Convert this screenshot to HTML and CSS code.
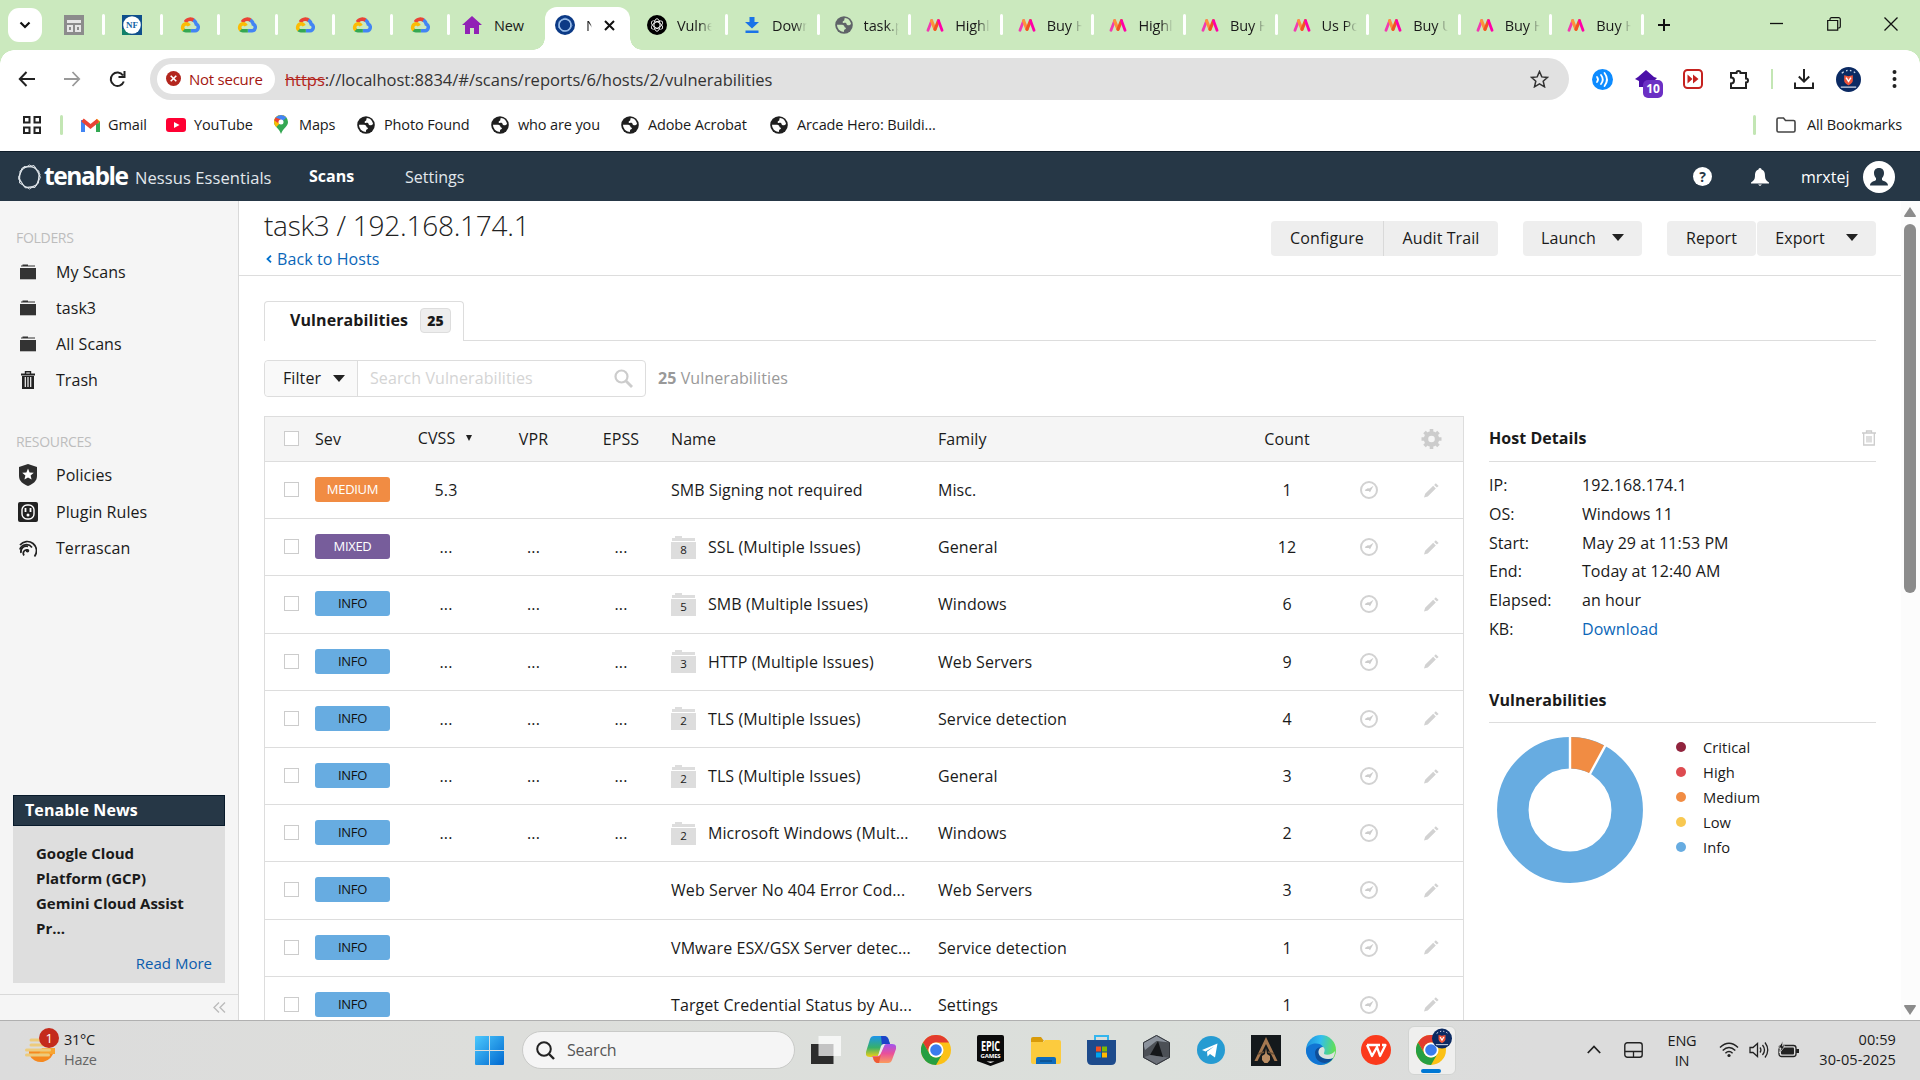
FILE: index.html
```html
<!DOCTYPE html>
<html lang="en">
<head>
<meta charset="utf-8">
<title>Nessus Essentials / Folders / View Scan</title>
<link rel="stylesheet" href="styles.css">
</head>
<body>
<svg class="defs" width="0" height="0">
  <symbol id="gcloud" viewBox="0 0 24 20"><path d="M6.500 6.500A6.500 6.500 0 0 1 17 5" fill="none" stroke="#ea4335" stroke-width="4.400"/><path d="M16 4a8 8 0 0 1 3.500 5A4.200 4.200 0 0 1 18 17h-5" fill="none" stroke="#4285f4" stroke-width="4.200"/><path d="M13 17H7a5 5 0 0 1-3-1.300" fill="none" stroke="#34a853" stroke-width="4.200"/><path d="M4.500 16A4.400 4.400 0 0 1 7 8.500a4.500 4.500 0 0 1 4 2.500" fill="none" stroke="#fbbc05" stroke-width="4.200"/></symbol>
  <symbol id="globe" viewBox="0 0 20 20"><circle cx="10" cy="10" r="9.800" fill="currentColor"/><path d="M11 2.200c3.600.2 6.300 3 6.800 6.600-1.200 1.400-2.700 2-4.200 1.200-1.200-.7-.2-1.800-1.500-2.300-1.400-.4-2.300.6-3.300-.2-1-.9.200-2 1.300-2.600.8-.5-.3-1.600.9-2.700z" fill="var(--cut)"/><path d="M2.200 9.800h5.600c1.800 0 2.600 1.200 2.700 2.200.1 1 1.600.6 1.700 1.700 0 1.200-1.500 1-2 1.800-.4.700.1 1.600-.6 2.300A7.800 7.800 0 0 1 2.200 9.800z" fill="var(--cut)"/></symbol>
  <symbol id="myntra" viewBox="0 0 20 16"><path d="M2 14 6.200 3" stroke="#f13ab1" stroke-width="3.200" stroke-linecap="round"/><path d="M6 3l4 10" stroke="#fd913c" stroke-width="3.600" stroke-linecap="round"/><path d="M10 13l4-10" stroke="#f05524" stroke-width="3.600" stroke-linecap="round"/><path d="M14 3l4 11" stroke="#ff00a8" stroke-width="3.200" stroke-linecap="round"/></symbol>
  <symbol id="folder" viewBox="0 0 16 16"><path d="M1 2.500V1.500h1.500V.5H8v1h7v1zM0 4h16v11H0z" fill="#333"/><path d="M0 15h16v1H0z" fill="#bbb"/></symbol>
  <symbol id="group" viewBox="0 0 25 23"><path d="M1 5V2h3V0h7v2h13v3zM0 6h25v17H0z" fill="#ddd"/></symbol>
  <symbol id="clock" viewBox="0 0 18 18"><circle cx="9" cy="9" r="8" fill="none" stroke="#d2d2d2" stroke-width="2"/><path d="M13.500 4.800 10 11.200 8.800 10H5.500L4.800 9l3-1.800 1.500.2z" fill="#ccc"/></symbol>
  <symbol id="pencil" viewBox="0 0 16 16"><path d="M0 15.500l1.200-4L9.800 3l2.800 2.800L4 14.300zM10.800 2 12.600.2l3 3-1.900 1.700z" fill="#d2d2d2"/></symbol>
  <symbol id="chrome" viewBox="0 0 30 30"><circle cx="15" cy="15" r="15" fill="#fbc116"/><path d="M2 7.500A15 15 0 0 1 28 7.500H15a7.500 7.500 0 0 0-6.500 11.300z" fill="#e33b2e"/><path d="M2 7.500A15 15 0 0 0 15 30l6.500-11.300a7.500 7.500 0 0 1-13 0z" fill="#269f42"/><circle cx="15" cy="15" r="7.500" fill="#fff"/><circle cx="15" cy="15" r="5.800" fill="#3a7cec"/></symbol>
  <symbol id="badge" viewBox="0 0 26 26"><circle cx="13" cy="13" r="13" fill="#0b2a63"/><path d="M8.500 8.500 13 9.500l4.500-1v5.500c0 3-4.500 5-4.500 5s-4.500-2-4.500-5z" fill="#f0543a"/><path d="M10.500 11l2.500 4 2.500-4" stroke="#fff" stroke-width="1.500" fill="none"/><path d="M6 6.500l2-1.500M10.500 4l1.500-.5M14.500 3.500l1.500.5M18.500 5l1.500 1M5 21h16" stroke="#cfd8ea" stroke-width="1.300"/></symbol>
</svg>

<header class="tabstrip">
  <span class="tabsearch"><svg width="12" height="8" viewBox="0 0 12 8"><path d="M1.500 1.500 6 6l4.500-4.500" fill="none" stroke="#111" stroke-width="2.200"/></svg></span>
  <span class="tab pin"><svg width="20" height="20" viewBox="0 0 20 20"><path d="M0 0h20v20H0z" fill="#8c8c8c"/><path d="M3 5h14v3H3zM3 10h6v7H3zM11 10h6v7h-6z" fill="#e6e6e6"/><path d="M5 12h2v3H5zM13 12h2v3h-2z" fill="#8c8c8c"/></svg></span>
  <span class="tab pin"><svg width="20" height="20" viewBox="0 0 20 20"><path d="M0 0h20v20H0z" fill="#0f4f8c"/><path d="M0 14h8v6H0z" fill="#11806a"/><circle cx="10" cy="10" r="8.800" fill="#fff"/><text x="10" y="13" class="nf" text-anchor="middle">NF</text></svg></span>
  <span class="tab pin"><svg width="21" height="18"><use href="#gcloud"/></svg></span>
  <span class="tab pin"><svg width="21" height="18"><use href="#gcloud"/></svg></span>
  <span class="tab pin"><svg width="21" height="18"><use href="#gcloud"/></svg></span>
  <span class="tab pin"><svg width="21" height="18"><use href="#gcloud"/></svg></span>
  <span class="tab pin"><svg width="21" height="18"><use href="#gcloud"/></svg></span>
  <span class="tab home"><svg width="20" height="18" viewBox="0 0 20 18"><path d="M10 0l10 9h-3v9h-5v-6H8v6H3V9H0z" fill="#9122b5"/></svg><span class="tabtext full">New</span></span>
  <span class="tab active"><svg width="20" height="20" viewBox="0 0 20 20"><circle cx="10" cy="10" r="10" fill="#0c3a86"/><circle cx="10" cy="10" r="6" fill="none" stroke="#a9c8ef" stroke-width="1.500"/><path d="M10 3l5 2.500 2 5-3 5-6 1-4.500-4 .5-6z" fill="none" stroke="#7fa8dd" stroke-width=".8"/></svg><span class="tabtext tiny">N</span><svg class="x" width="11" height="11" viewBox="0 0 11 11"><path d="M1 1l9 9M10 1l-9 9" stroke="#111" stroke-width="2"/></svg></span>
  <span class="tab gpt"><svg width="20" height="20" viewBox="0 0 20 20"><circle cx="10" cy="10" r="10" fill="#000"/><g fill="none" stroke="#fff" stroke-width=".9"><ellipse cx="10" cy="10" rx="3" ry="6.300"/><ellipse cx="10" cy="10" rx="3" ry="6.300" transform="rotate(60 10 10)"/><ellipse cx="10" cy="10" rx="3" ry="6.300" transform="rotate(120 10 10)"/></g></svg><span class="tabtext">Vulne</span></span>
  <span class="tab"><svg width="20" height="16" viewBox="0 0 20 16"><path d="M7.500 0h5v5H17l-7 6.500L3 5h4.500zM3.500 13.500h13V16h-13z" fill="#1a73e8"/></svg><span class="tabtext">Down</span></span>
  <span class="tab"><svg class="gl grey" width="18" height="18"><use href="#globe"/></svg><span class="tabtext">task.p</span></span>
  <span class="tab"><svg width="17" height="14"><use href="#myntra"/></svg><span class="tabtext">Highl</span></span>
  <span class="tab"><svg width="17" height="14"><use href="#myntra"/></svg><span class="tabtext">Buy H</span></span>
  <span class="tab"><svg width="17" height="14"><use href="#myntra"/></svg><span class="tabtext">Highl</span></span>
  <span class="tab"><svg width="17" height="14"><use href="#myntra"/></svg><span class="tabtext">Buy H</span></span>
  <span class="tab"><svg width="17" height="14"><use href="#myntra"/></svg><span class="tabtext">Us Po</span></span>
  <span class="tab"><svg width="17" height="14"><use href="#myntra"/></svg><span class="tabtext">Buy U</span></span>
  <span class="tab"><svg width="17" height="14"><use href="#myntra"/></svg><span class="tabtext">Buy H</span></span>
  <span class="tab"><svg width="17" height="14"><use href="#myntra"/></svg><span class="tabtext">Buy H</span></span>
  <svg class="plus" width="14" height="14" viewBox="0 0 14 14"><path d="M7 1v12M1 7h12" stroke="#111" stroke-width="2"/></svg>
  <span class="winctl">
    <svg width="14" height="14" viewBox="0 0 14 14"><path d="M0 6.500h13" stroke="#111" stroke-width="1.300"/></svg>
    <svg width="14" height="14" viewBox="0 0 14 14"><path d="M.7 3.500h10v9.700h-10zM3 3.500V2.200A1.500 1.500 0 0 1 4.500.7h7A1.700 1.700 0 0 1 13.300 2.500v7A1.500 1.500 0 0 1 12 11h-1" fill="none" stroke="#111" stroke-width="1.200"/></svg>
    <svg width="14" height="14" viewBox="0 0 14 14"><path d="M.5.500l13 13M13.500.5l-13 13" stroke="#111" stroke-width="1.300"/></svg>
  </span>
</header>

<div class="toolbar">
  <svg class="nav1" width="18" height="16" viewBox="0 0 18 16"><path d="M17 8H2M8.500 1 1.800 8l6.700 7" fill="none" stroke="#222" stroke-width="2"/></svg>
  <svg class="nav2" width="18" height="16" viewBox="0 0 18 16"><path d="M1 8h15M9.500 1l6.700 7-6.700 7" fill="none" stroke="#999" stroke-width="1.800"/></svg>
  <svg class="nav3" width="17" height="17" viewBox="0 0 17 17"><path d="M14.800 10.500A6.700 6.700 0 1 1 14 4.500M15.500 0v6h-6" fill="none" stroke="#222" stroke-width="2"/></svg>
  <div class="omnibox">
    <span class="chip"><svg width="15" height="15" viewBox="0 0 15 15"><circle cx="7.500" cy="7.500" r="7.500" fill="#b3261e"/><path d="M4.700 4.700l5.600 5.600M10.300 4.700l-5.600 5.600" stroke="#fff" stroke-width="1.600"/></svg>Not secure</span>
    <span class="url"><s>https</s>://localhost:8834/#/scans/reports/6/hosts/2/vulnerabilities</span>
    <svg class="star" width="19" height="18" viewBox="0 0 19 18"><path d="M9.500 1.500l2.300 5.400 5.700.5-4.300 3.800 1.300 5.600-5-3-5 3 1.300-5.600L1.500 7.400l5.700-.5z" fill="none" stroke="#333" stroke-width="1.500"/></svg>
  </div>
  <div class="exts">
    <svg width="21" height="21" viewBox="0 0 21 21"><circle cx="10.500" cy="10.500" r="10.500" fill="#0d8bff"/><path d="M5 8q2 2.500 0 5M9 6q3.500 4.500 0 9M12.500 4q5 6.500 0 13" fill="none" stroke="#fff" stroke-width="1.800" stroke-linecap="round"/></svg>
    <span class="ext10"><svg width="22" height="18" viewBox="0 0 22 18"><path d="M11 0l8 7 3 1-3 3v6H4v-6L0 9l3-2z" fill="#4a0fa8"/></svg><b>10</b></span>
    <svg width="20" height="20" viewBox="0 0 20 20"><rect x="1" y="1" width="18" height="18" rx="3.500" fill="#fff" stroke="#c5221f" stroke-width="2"/><path d="M4.500 5.500 9.500 10l-5 4.500zM10 5.500l5.500 4.500L10 14.500z" fill="#c5221f"/></svg>
    <svg width="21" height="21" viewBox="0 0 21 21"><path d="M2 4h5.500a2 2 0 0 1 4 0H17v5.500a2 2 0 0 1 0 4V19H2v-4.500a3 3 0 0 0 0-6z" fill="none" stroke="#222" stroke-width="2"/></svg>
    <i></i>
    <svg width="20" height="20" viewBox="0 0 20 20"><path d="M10 0v12M4.800 7.500 10 12.700l5.200-5.200M1 13.500V19h18v-5.500" fill="none" stroke="#222" stroke-width="2"/></svg>
    <svg width="25" height="25"><use href="#badge"/></svg>
    <svg width="5" height="18" viewBox="0 0 5 18"><path d="M2.500 2h.01M2.500 9h.01M2.500 16h.01" stroke="#222" stroke-width="4" stroke-linecap="round"/></svg>
  </div>
</div>

<nav class="bookmarks">
  <svg class="apps" width="18" height="18" viewBox="0 0 18 18"><path d="M1 1h5.500v5.500H1zM11.500 1H17v5.500h-5.500zM1 11.500h5.500V17H1zM11.500 11.500H17V17h-5.500z" fill="none" stroke="#222" stroke-width="2"/></svg>
  <i></i>
  <span class="bm gm"><svg width="19" height="14" viewBox="0 0 19 14"><path d="M2 14V2" stroke="#4285f4" stroke-width="4"/><path d="M17 14V3" stroke="#34a853" stroke-width="4"/><path d="M15.500 4.500 17.500 2" stroke="#fbbc04" stroke-width="4"/><path d="M1.500 2l8 6.500L17 2.500" fill="none" stroke="#ea4335" stroke-width="4"/></svg>Gmail</span>
  <span class="bm yt"><svg width="20" height="14" viewBox="0 0 20 14"><rect width="20" height="14" rx="3" fill="#ff0033"/><path d="M8 4l5.500 3L8 10z" fill="#fff"/></svg>YouTube</span>
  <span class="bm mp"><svg width="14" height="19" viewBox="0 0 14 19"><path d="M7 0a7 7 0 0 0-7 7c0 2 1 3.500 2.500 5.300C4.500 14.500 6 16 7 19c1-3 2.500-4.500 4.500-6.700C13 10.500 14 9 14 7a7 7 0 0 0-7-7z" fill="#34a853"/><path d="M0 7a7 7 0 0 0 2.300 5L12 2A7 7 0 0 0 0 7z" fill="#fbbc04"/><path d="M7 0a7 7 0 0 0-5.500 2.700L7 7.500 12.500 2.500A7 7 0 0 0 7 0z" fill="#4285f4"/><path d="M1.600 2.500A7 7 0 0 0 .3 5.500L4 8l3-3.500z" fill="#ea4335"/><circle cx="7" cy="7" r="2.500" fill="#fff"/></svg>Maps</span>
  <span class="bm b1"><svg class="gl" width="18" height="18"><use href="#globe"/></svg>Photo Found</span>
  <span class="bm b2"><svg class="gl" width="18" height="18"><use href="#globe"/></svg>who are you</span>
  <span class="bm b3"><svg class="gl" width="18" height="18"><use href="#globe"/></svg>Adobe Acrobat</span>
  <span class="bm b4"><svg class="gl" width="18" height="18"><use href="#globe"/></svg>Arcade Hero: Buildi...</span>
  <i class="push"></i>
  <span class="bm all"><svg width="20" height="16" viewBox="0 0 20 16"><path d="M1 2.500A1.500 1.500 0 0 1 2.500 1h5l2 2.500h8A1.500 1.500 0 0 1 19 5v8.500a1.500 1.500 0 0 1-1.500 1.500h-15A1.500 1.500 0 0 1 1 13.500z" fill="none" stroke="#444" stroke-width="1.600"/></svg>All Bookmarks</span>
</nav>

<div class="topnav">
  <svg class="hex" width="25" height="26" viewBox="0 0 25 26"><g fill="none" stroke="#e8edf2" stroke-width=".9"><path d="M12.500 1l9.500 6.200-.5 12L12.500 25l-10-6 .5-12z"/><path d="M7 2.500l11 .8 5.500 10L18 23.500 7.500 23 1.500 13z"/><path d="M17 1.500l6 9-3.500 11-11 2.500-7-9L5 4z"/></g></svg>
  <span class="brand">tenable</span><span class="product">Nessus Essentials</span>
  <span class="link on">Scans</span><span class="link">Settings</span>
  <svg class="help" width="19" height="19" viewBox="0 0 19 19"><circle cx="9.500" cy="9.500" r="9.500" fill="#fff"/><text x="9.500" y="14.500" text-anchor="middle" class="q">?</text></svg>
  <svg class="bell" width="18" height="18" viewBox="0 0 18 18"><path d="M9 0c1 0 1.500.8 1.500 1.500C13.500 2.500 14 5 14 8c0 3.500 1.500 5 4 6.500v1H0v-1C2.500 13 4 11.500 4 8c0-3 .5-5.500 3.500-6.500C7.500.8 8 0 9 0zM7 16.500h4L9 18z" fill="#fff"/></svg>
  <span class="user">mrxtej</span>
  <svg class="avatar" width="32" height="32" viewBox="0 0 32 32"><circle cx="16" cy="16" r="16" fill="#fff"/><path d="M16 7c3.500 0 5 2.200 5 5 0 2.500-1 4-2 5v2c1.500 1.500 6 1.500 6 5.500H7c0-4 4.500-4 6-5.500v-2c-1-1-2-2.500-2-5 0-2.800 1.500-5 5-5z" fill="#263746"/></svg>
</div>

<div class="app">
  <aside class="side">
    <h4>FOLDERS</h4>
    <a><svg width="16" height="16"><use href="#folder"/></svg>My Scans</a>
    <a><svg width="16" height="16"><use href="#folder"/></svg>task3</a>
    <a><svg width="16" height="16"><use href="#folder"/></svg>All Scans</a>
    <a><svg width="14" height="18" viewBox="0 0 14 18"><path d="M0 2.500h14v2H0z" fill="#222"/><path d="M4.500 3V.8h5V3" fill="none" stroke="#222" stroke-width="1.400"/><path d="M1 5h12v13H1z" fill="#222"/><path d="M4.300 6v10M7 6v10M9.700 6v10" stroke="#f5f5f5" stroke-width="1.200"/></svg>Trash</a>
    <h4 class="res">RESOURCES</h4>
    <a><svg width="18" height="22" viewBox="0 0 18 22"><path d="M9 0l9 3v9c0 5-4 8-9 10-5-2-9-5-9-10V3z" fill="#2d2d2d"/><path d="M9 4.500l1.600 4 4.200.3-3.200 2.700 1 4.100L9 13.400l-3.600 2.200 1-4.100-3.200-2.700 4.200-.3z" fill="#fff"/></svg>Policies</a>
    <a><svg width="20" height="20" viewBox="0 0 20 20"><rect width="20" height="20" rx="2" fill="#222"/><rect x="4" y="3" width="12" height="14" rx="5" fill="none" stroke="#fff" stroke-width="1.400"/><path d="M7.500 6v4M12.500 6v4" stroke="#fff" stroke-width="1.800"/><circle cx="10" cy="13" r="1.500" fill="#fff"/></svg>Plugin Rules</a>
    <a><svg width="18" height="17" viewBox="0 0 18 17"><g fill="none" stroke="#222" stroke-width="1.700"><path d="M1 5A9 9 0 0 1 15.500 16.500"/><path d="M.8 9.500A7 7 0 0 1 13 7.500"/><path d="M2 13a5.500 5.500 0 0 1 7-6.500M5 15.500c-2-3 .5-6.500 4-5.500"/></g><circle cx="8.500" cy="10.800" r="1.800" fill="#222"/></svg>Terrascan</a>
    <section class="news">
      <h5>Tenable News</h5>
      <p>Google Cloud<br>Platform (GCP)<br>Gemini Cloud Assist<br>Pr...</p>
      <a>Read More</a>
    </section>
    <div class="fold"><svg width="13" height="11" viewBox="0 0 13 11"><path d="M6 .5 1 5.500l5 5M12 .5 7 5.500l5 5" fill="none" stroke="#bbb" stroke-width="1.400"/></svg></div>
  </aside>

  <main class="main">
    <div class="titlebar">
      <div>
        <h1>task3 / 192.168.174.1</h1>
        <a class="back"><svg width="6" height="8" viewBox="0 0 6 8"><path d="M5 .7 1.500 4 5 7.300" fill="none" stroke="#0071ce" stroke-width="1.800"/></svg>Back to Hosts</a>
      </div>
      <div class="btns">
        <span class="btn w1">Configure</span><span class="btn w2">Audit Trail</span>
        <span class="btn w3">Launch<i class="caret"></i></span>
        <span class="btn w4">Report</span><span class="btn w5">Export<i class="caret"></i></span>
      </div>
    </div>
    <div class="tabs"><span class="vt">Vulnerabilities<b>25</b></span></div>
    <div class="filters">
      <div class="search"><span class="filter">Filter<i class="caret"></i></span><span class="ph">Search Vulnerabilities</span><svg width="19" height="19" viewBox="0 0 19 19"><circle cx="7.500" cy="7.500" r="6" fill="none" stroke="#ccc" stroke-width="2.200"/><path d="M12 12l6 6" stroke="#ccc" stroke-width="2.800"/></svg></div>
      <span class="total"><b>25</b> Vulnerabilities</span>
    </div>
    <div class="cols">
      <div class="table">
        <div class="row head"><i class="cb"></i><span>Sev</span><span class="c cv">CVSS<em></em></span><span class="c">VPR</span><span class="c">EPSS</span><span class="n">Name</span><span>Family</span><span class="c">Count</span><span></span><span class="c"><svg width="21" height="20" viewBox="0 0 20 20"><circle cx="10" cy="10" r="5.500" fill="none" stroke="#ccc" stroke-width="4.400"/><path d="M10 0v4M10 16v4M0 10h4M16 10h4M3 3l2.500 2.500M14.500 14.500 17 17M3 17l2.500-2.500M14.500 5.500 17 3" stroke="#ccc" stroke-width="3.600"/></svg></span></div>
        <div class="row"><i class="cb"></i><span class="sev med">MEDIUM</span><span class="c">5.3</span><span></span><span></span><span class="n">SMB Signing not required</span><span>Misc.</span><span class="c">1</span><span class="c"><svg width="18" height="18"><use href="#clock"/></svg></span><span class="c"><svg width="15" height="15"><use href="#pencil"/></svg></span></div>
        <div class="row"><i class="cb"></i><span class="sev mix">MIXED</span><span class="c">...</span><span class="c">...</span><span class="c">...</span><span class="n"><span class="grp"><svg width="25" height="23"><use href="#group"/></svg><small>8</small></span>SSL (Multiple Issues)</span><span>General</span><span class="c">12</span><span class="c"><svg width="18" height="18"><use href="#clock"/></svg></span><span class="c"><svg width="15" height="15"><use href="#pencil"/></svg></span></div>
        <div class="row"><i class="cb"></i><span class="sev">INFO</span><span class="c">...</span><span class="c">...</span><span class="c">...</span><span class="n"><span class="grp"><svg width="25" height="23"><use href="#group"/></svg><small>5</small></span>SMB (Multiple Issues)</span><span>Windows</span><span class="c">6</span><span class="c"><svg width="18" height="18"><use href="#clock"/></svg></span><span class="c"><svg width="15" height="15"><use href="#pencil"/></svg></span></div>
        <div class="row"><i class="cb"></i><span class="sev">INFO</span><span class="c">...</span><span class="c">...</span><span class="c">...</span><span class="n"><span class="grp"><svg width="25" height="23"><use href="#group"/></svg><small>3</small></span>HTTP (Multiple Issues)</span><span>Web Servers</span><span class="c">9</span><span class="c"><svg width="18" height="18"><use href="#clock"/></svg></span><span class="c"><svg width="15" height="15"><use href="#pencil"/></svg></span></div>
        <div class="row"><i class="cb"></i><span class="sev">INFO</span><span class="c">...</span><span class="c">...</span><span class="c">...</span><span class="n"><span class="grp"><svg width="25" height="23"><use href="#group"/></svg><small>2</small></span>TLS (Multiple Issues)</span><span>Service detection</span><span class="c">4</span><span class="c"><svg width="18" height="18"><use href="#clock"/></svg></span><span class="c"><svg width="15" height="15"><use href="#pencil"/></svg></span></div>
        <div class="row"><i class="cb"></i><span class="sev">INFO</span><span class="c">...</span><span class="c">...</span><span class="c">...</span><span class="n"><span class="grp"><svg width="25" height="23"><use href="#group"/></svg><small>2</small></span>TLS (Multiple Issues)</span><span>General</span><span class="c">3</span><span class="c"><svg width="18" height="18"><use href="#clock"/></svg></span><span class="c"><svg width="15" height="15"><use href="#pencil"/></svg></span></div>
        <div class="row"><i class="cb"></i><span class="sev">INFO</span><span class="c">...</span><span class="c">...</span><span class="c">...</span><span class="n"><span class="grp"><svg width="25" height="23"><use href="#group"/></svg><small>2</small></span>Microsoft Windows (Mult...</span><span>Windows</span><span class="c">2</span><span class="c"><svg width="18" height="18"><use href="#clock"/></svg></span><span class="c"><svg width="15" height="15"><use href="#pencil"/></svg></span></div>
        <div class="row"><i class="cb"></i><span class="sev">INFO</span><span></span><span></span><span></span><span class="n">Web Server No 404 Error Cod...</span><span>Web Servers</span><span class="c">3</span><span class="c"><svg width="18" height="18"><use href="#clock"/></svg></span><span class="c"><svg width="15" height="15"><use href="#pencil"/></svg></span></div>
        <div class="row"><i class="cb"></i><span class="sev">INFO</span><span></span><span></span><span></span><span class="n">VMware ESX/GSX Server detec...</span><span>Service detection</span><span class="c">1</span><span class="c"><svg width="18" height="18"><use href="#clock"/></svg></span><span class="c"><svg width="15" height="15"><use href="#pencil"/></svg></span></div>
        <div class="row"><i class="cb"></i><span class="sev">INFO</span><span></span><span></span><span></span><span class="n">Target Credential Status by Au...</span><span>Settings</span><span class="c">1</span><span class="c"><svg width="18" height="18"><use href="#clock"/></svg></span><span class="c"><svg width="15" height="15"><use href="#pencil"/></svg></span></div>
      </div>
      <aside class="details">
        <h3>Host Details<svg width="14" height="16" viewBox="0 0 14 16"><path d="M0 3h14M4.500 3V1h5v2M1.700 3v12h10.600V3M5 6v6.500M7 6v6.500M9 6v6.500" fill="none" stroke="#ccc" stroke-width="1.300"/></svg></h3>
        <dl><dt>IP:</dt><dd>192.168.174.1</dd><dt>OS:</dt><dd>Windows 11</dd><dt>Start:</dt><dd>May 29 at 11:53 PM</dd><dt>End:</dt><dd>Today at 12:40 AM</dd><dt>Elapsed:</dt><dd>an hour</dd><dt>KB:</dt><dd><a>Download</a></dd></dl>
        <h3 class="vh">Vulnerabilities</h3>
        <div class="chart">
          <svg width="146" height="146" viewBox="-73 -73 146 146"><circle r="57.200" fill="none" stroke="#67ace1" stroke-width="31.500"/><path d="M0-73A73 73 0 0 1 35.170-63.970L20-36.400A41.500 41.500 0 0 0 0-41.500z" fill="#f18c43"/><path d="M0-74V-40M35.600-64.900 19.500-35.300" stroke="#fff" stroke-width="2.400"/></svg>
          <ul><li class="k1">Critical</li><li class="k2">High</li><li class="k3">Medium</li><li class="k4">Low</li><li class="k5">Info</li></ul>
        </div>
      </aside>
    </div>
  </main>
  <div class="scroll"><svg width="12" height="10" viewBox="0 0 12 10"><path d="M6 0l6 9q0 1-1 1H1q-1 0-1-1z" fill="#8b8b8b"/></svg><i></i><svg class="dn" width="12" height="10" viewBox="0 0 12 10"><path d="M6 10l6-9q0-1-1-1H1q-1 0-1 1z" fill="#8b8b8b"/></svg></div>
</div>

<footer class="taskbar">
  <div class="weather">
    <svg width="36" height="38" viewBox="0 0 36 38"><path d="M4 22h25a13 13 0 0 1-25 4z" fill="#f5891f"/><path d="M17 20h13v6H14z" fill="#f7a431"/><path d="M6 12h8M6 17h14M1.500 22h23M1.500 27h22" stroke="#edcb7c" stroke-width="3" stroke-linecap="round"/><circle cx="24" cy="10" r="10" fill="#c42b1c"/><text x="24" y="15" text-anchor="middle" class="wn">1</text></svg>
    <div>31°C<br><span>Haze</span></div>
  </div>
  <div class="dock">
    <svg width="29" height="29" viewBox="0 0 29 29"><defs><linearGradient id="w" x2="1" y2="1"><stop stop-color="#4cc9fd"/><stop offset="1" stop-color="#0068d0"/></linearGradient></defs><path d="M0 1q0-1 1-1h13v14H0zM15 0h13q1 0 1 1v13H15zM0 15h14v14H1q-1 0-1-1zM15 15h14v13q0 1-1 1H15z" fill="url(#w)"/></svg>
    <div class="sbox"><svg width="19" height="19" viewBox="0 0 19 19"><circle cx="8" cy="8" r="6.800" fill="none" stroke="#222" stroke-width="2"/><path d="M13 13l5 5" stroke="#222" stroke-width="2.400"/></svg>Search</div>
    <div class="icons">
      <span><svg width="30" height="28" viewBox="0 0 30 28"><path d="M0 8h22.500v20H0z" fill="#2c2c2c"/><path d="M7.500 0H30v20H7.500z" fill="#fff" opacity=".72"/></svg></span>
      <span><svg width="30" height="28" viewBox="0 0 30 28"><defs><linearGradient id="cp1" x2="0" y2="1"><stop stop-color="#1b94ec"/><stop offset=".55" stop-color="#37b06a"/><stop offset="1" stop-color="#f3cf16"/></linearGradient><linearGradient id="cp2" x2="0" y2="1"><stop stop-color="#a154ee"/><stop offset=".5" stop-color="#e9509a"/><stop offset="1" stop-color="#fb9c5c"/></linearGradient></defs><path d="M8 0h10q4 0 5 5l1 3h-5q-3 0-4 4l-2 6q-1 3-4 3H4q-5 0-4-5L4 3q1-3 4-3z" fill="url(#cp1)"/><path d="M15 0h3q4 0 5 5l1 3h-5q-2 0-3 2z" fill="#1c43c8"/><path d="M22 27H12q-4 0-5-5l-1-2h5q3 0 4-4l2-5q1-3 4-3h5q5 0 4 5l-4 11q-1 3-4 3z" fill="url(#cp2)"/><path d="M13 27h-1q-4 0-5-6h4q3 0 4-3z" fill="#ee5a35"/><path d="M15 10q1-2 3-2h1l-4 9q-1 3-3 3z" fill="#e9eae9"/></svg></span>
      <span><svg width="30" height="30"><use href="#chrome"/></svg></span>
      <span><svg width="27" height="31" viewBox="0 0 27 31"><path d="M2 0h23q2 0 2 2v24l-13.500 5L0 26V2q0-2 2-2z" fill="#0b0b0b"/><text x="13.500" y="16" text-anchor="middle" textLength="19" lengthAdjust="spacingAndGlyphs" class="ep1">EPIC</text><text x="13.500" y="23" text-anchor="middle" class="ep2">GAMES</text><path d="M9.500 26.500h8l-4 1.500z" fill="#fff"/></svg></span>
      <span><svg width="30" height="27" viewBox="0 0 30 27"><path d="M0 2q0-2 2-2h8l3 4h-1v5H0z" fill="#d99b0a"/><path d="M0 5h12l2-2h14q2 0 2 2v20q0 2-2 2H2q-2 0-2-2z" fill="#fccb3e"/><path d="M5 27v-5q0-2 2-2h16q2 0 2 2v5z" fill="#0f6cbd"/><path d="M9 24h12" stroke="#083f73"/></svg></span>
      <span><svg width="29" height="30" viewBox="0 0 29 30"><path d="M8 5V1h13v4" fill="none" stroke="#34b6ee" stroke-width="2"/><path d="M0 5h29v20q0 5-5 5H5q-5 0-5-5z" fill="#1d4b8c"/><path d="M9 11.500h5v5H9z" fill="#f25022"/><path d="M15 11.500h5v5h-5z" fill="#7fba00"/><path d="M9 17.500h5v5H9z" fill="#00a4ef"/><path d="M15 17.500h5v5h-5z" fill="#ffb900"/></svg></span>
      <span><svg width="27" height="30" viewBox="0 0 27 30"><path d="M13.500 0 27 7.500v15L13.500 30 0 22.500v-15z" fill="#4c5056"/><path d="M13.500 0 27 7.500 13.500 6 2 15 0 7.500z" fill="#8b929c"/><path d="M15 6l5 16-13-2z" fill="#15171a"/><path d="M0 22.500 7 20l13 2 7 .5L13.500 30z" fill="#6b7078"/><path d="M13.500.5l13 7.200v14.600l-13 7.200-13-7.200V7.700z" fill="none" stroke="#33363b"/></svg></span>
      <span><svg width="28" height="28" viewBox="0 0 28 28"><circle cx="14" cy="14" r="14" fill="#269bd2"/><path d="M5 14 20.500 7.500 18 21.500l-5-3.500-2.500 2.500-.5-4.800L17 10.500 8.500 15.500z" fill="#fff"/></svg></span>
      <span><svg width="30" height="31" viewBox="0 0 30 31"><path d="M0 0h30v31H0z" fill="#14191c"/><path d="M15 2 3.500 26h3L15 9l8.500 17h3z" fill="#a67850"/><path d="M7 19l6-2M23 19l-6-2" stroke="#6c5137" stroke-width="1.500"/><path d="M15 13l1 6 3 2v4l-2.500 3h-3L11 25v-4l3-2z" fill="#b98d64"/></svg></span>
      <span><svg width="30" height="30" viewBox="0 0 30 30"><defs><linearGradient id="ed" x2="1" y2=".2"><stop stop-color="#1c8cdb"/><stop offset=".5" stop-color="#31bdf0"/><stop offset="1" stop-color="#61df58"/></linearGradient></defs><circle cx="15" cy="15" r="15" fill="url(#ed)"/><path d="M0 15C1 8 14 6 17 12c-4 0-6 5-3 9 3 3 9 4 13 2-4 7-12 8-17 6C4 27 0 21 0 15z" fill="#1174d3"/><path d="M9 17c1-4 4-5 8-5-4 1-6 5-3 9 3 3 9 4 13 2-4 7-14 6-17 0q-1-3-1-6z" fill="#0f4e98"/><path d="M17 12c3 2 1 5 1 7 3 2 9 0 11-3 0 3-1 5-2 7-4 2-10 1-13-2-3-4-1-9 3-9z" fill="#dce2de"/></svg></span>
      <span><svg width="30" height="30" viewBox="0 0 30 30"><circle cx="15" cy="15" r="15" fill="#fb3a1c"/><path d="M6 10h13M6 10l5 11 5-9 3 9 5.500-11H21" fill="none" stroke="#fff" stroke-width="2.300" stroke-linejoin="round"/></svg></span>
      <span class="cur"><svg width="42" height="48" viewBox="0 0 42 48"><use href="#chrome" x="3" y="9" width="30" height="30"/><use href="#badge" x="19" y="2" width="20" height="21"/><rect x="8" y="43" width="20" height="4" rx="2" fill="#0078d4"/></svg></span>
    </div>
  </div>
  <div class="tray">
    <svg class="t1" width="14" height="9" viewBox="0 0 14 9"><path d="M.8 8 7 1.500 13.200 8" fill="none" stroke="#222" stroke-width="1.800"/></svg>
    <svg class="t2" width="19" height="16" viewBox="0 0 19 16"><rect x=".8" y=".8" width="17.400" height="14.400" rx="2.500" fill="none" stroke="#222" stroke-width="1.400"/><path d="M1 9.500h17M9.500 9.500V15" stroke="#222" stroke-width="1.300"/></svg>
    <div class="lang">ENG<br>IN</div>
    <svg class="t3" width="20" height="16" viewBox="0 0 20 16"><path d="M1 5.500Q10-3 19 5.500M3.700 8.500q6.300-6 12.600 0M6.400 11.300q3.600-3.500 7.200 0" fill="none" stroke="#222" stroke-width="1.500"/><circle cx="10" cy="13.500" r="1.600" fill="#222"/></svg>
    <svg class="t4" width="20" height="18" viewBox="0 0 20 18"><path d="M1 6.500h3L8.500 2.500v13L4 11.500H1zM11 6.500q1.800 2.500 0 5M13.500 4q4 5 0 10M16 1.500q5.500 7.500 0 15" fill="none" stroke="#222" stroke-width="1.300"/></svg>
    <svg class="t5" width="21" height="17" viewBox="0 0 21 17"><rect x="1" y="4.500" width="17" height="11" rx="2.500" fill="none" stroke="#222" stroke-width="1.300"/><rect x="3" y="6.500" width="13" height="7" rx="1" fill="#222"/><path d="M18 8h3v4h-3z" fill="#222"/><path d="M5 0 0 7h3l-1.500 5L7 5H4.500z" fill="#222" stroke="#dcdcdc" stroke-width=".8"/></svg>
    <div class="time">00:59<br>30-05-2025</div>
  </div>
</footer>
</body>
</html>
```
FILE: styles.css
```css
* { box-sizing: border-box; }
body { margin: 0; width: 1920px; height: 1080px; overflow: hidden; background: #fff; color: #1a1a1a; font-family: "Open Sans", "Noto Sans", sans-serif; font-size: 16px; }
h1, h3, h4, h5, p, dl, dd, ul { margin: 0; padding: 0; }
svg { flex: none; display: block; }
i { flex: none; }
.defs { position: absolute; }
.gl { color: #1f1f1f; --cut: #fff; }
.gl.grey { color: #5f6368; --cut: #cbe9be; }

/* Browser tab strip */
.tabstrip { display: flex; height: 50px; background: #cbe9be; font-size: 14.5px; letter-spacing: -.1px; }
.tabsearch { flex: none; width: 34px; height: 34px; margin: 8px 4px 0 8px; background: #fff; border-radius: 11px; display: flex; align-items: center; justify-content: center; }
.tab { position: relative; flex: none; width: 91.600px; height: 50px; display: flex; align-items: center; padding-left: 14px; gap: 10px; }
.tab > svg:first-child { width: 20px; }
.tab::after { content: ""; position: absolute; right: 0; top: 14px; width: 3px; height: 21px; border-radius: 2px; background: #fff; }
.tab.pin { width: 57.500px; padding: 0 3px 0 0; justify-content: center; }
.tab.pin:nth-child(2) { width: 59px; }
.tab.home { width: 94px; padding-left: 12px; gap: 12px; }
.tab.home::after, .tab.active::after { display: none; }
.tab.active { width: 85px; height: 43px; margin: 7px 3px 0 1px; background: #fff; border-radius: 12px 12px 0 0; padding: 0 0 7px 10px; gap: 11px; }
.tab.active::before { content: ""; position: absolute; left: -12px; right: -12px; bottom: 0; height: 12px; background: radial-gradient(circle at 0 0, #cbe9be 11.500px, #fff 12px) left / 12px 12px no-repeat, radial-gradient(circle at 100% 0, #cbe9be 11.500px, #fff 12px) right / 12px 12px no-repeat; }
.tabtext { width: 35px; overflow: hidden; white-space: nowrap; -webkit-mask-image: linear-gradient(90deg, #000 65%, transparent); mask-image: linear-gradient(90deg, #000 65%, transparent); }
.tabtext.full { -webkit-mask-image: none; mask-image: none; }
.tabtext.tiny { width: 6px; }
.tab.active .x { margin-left: 1px; }
.tab.gpt { width: 95px; }
.plus { margin: 18px 0 0 13px; }
.winctl { display: flex; gap: 43px; margin: 17px 22px 0 auto; }
.nf { font: bold 9px "Liberation Serif", serif; fill: #1464a5; }

/* Address bar */
.toolbar { height: 58px; display: flex; align-items: center; background: radial-gradient(circle at 14px 14px, #fff 13.500px, #cbe9be 14px) left top / 14px 14px no-repeat, radial-gradient(circle at 0 14px, #fff 13.500px, #cbe9be 14px) right top / 14px 14px no-repeat, #fff; }
.nav1 { margin-left: 18px; }
.nav2 { margin-left: 27px; }
.nav3 { margin-left: 28px; }
.omnibox { flex: none; width: 1419px; height: 42px; margin-left: 24px; border-radius: 21px; background: #e1e1e1; display: flex; align-items: center; padding: 0 20px 0 7px; }
.chip { width: 118px; height: 30px; border-radius: 15px; background: #fff; color: #a3160f; font-size: 15px; font-weight: 500; letter-spacing: -.25px; line-height: 28px; display: flex; align-items: center; gap: 8px; padding: 0 0 1px 9px; white-space: nowrap; }
.url { margin-left: 10px; font-size: 16.500px; white-space: nowrap; letter-spacing: -.01px; color: #333; }
.url s { color: #b3261e; }
.star { margin-left: auto; }
.exts { flex: 1; display: grid; grid-template-columns: 54px 42px 44px 48px 18px 46px 42px 50px; justify-items: center; align-items: center; padding-left: 6px; }
.exts i { width: 2px; height: 20px; background: #c3e6b4; }
.ext10 { position: relative; left: -4px; }
.ext10 b { position: absolute; left: 8px; top: 10px; width: 20px; height: 18px; border-radius: 5px; background: #6b2fc4; color: #fff; font-size: 12px; line-height: 18px; text-align: center; }

/* Bookmarks */
.bookmarks { height: 42px; margin-bottom: 1px; padding-bottom: 9px; display: flex; align-items: center; font-size: 14.500px; letter-spacing: -.13px; padding-left: 23px; padding-right: 19px; }
.bookmarks i { width: 3px; height: 20px; border-radius: 2px; background: #c3e6b4; margin-left: 19px; }
.bookmarks .push { margin-left: auto; margin-right: 20px; }
.bm { flex: none; display: flex; align-items: center; gap: 8px; white-space: nowrap; }
.gm { width: 85px; margin-left: 18px; }
.yt { width: 108px; }
.mp { width: 83px; gap: 11px; }
.b1 { width: 134px; gap: 9px; }
.b2 { width: 130px; gap: 9px; }
.b3 { width: 149px; gap: 9px; }
.b4 { gap: 9px; }
.all { width: 125px; gap: 11px; }

/* Product navigation */
.topnav { height: 50px; background: #263746; border-top: 1px solid #0f1d2a; color: #fff; display: flex; align-items: center; padding-right: 25px; white-space: nowrap; }
.hex { margin-left: 17px; }
.brand { width: 91px; margin: -3px 0 0 2px; font: bold 24.500px "Open Sans", sans-serif; letter-spacing: -1.400px; }
.product { width: 174px; margin-top: 1px; font-size: 16.500px; letter-spacing: .08px; color: #e2e7ec; }
.link { color: #e2e7ec; width: 96px; }
.link.on { font-weight: bold; color: #fff; margin-top: -2px; }
.help { margin-left: auto; }
.q { font: bold 14px "Open Sans", sans-serif; fill: #263746; }
.bell { margin-left: 39px; }
.user { width: 62px; margin-left: 32px; }

/* Page */
.app { display: flex; height: 819px; overflow: hidden; }
.side { flex: none; width: 239px; background: #f5f5f5; border-right: 1px solid #d9d9d9; display: flex; flex-direction: column; letter-spacing: .06px; }
.side h4 { font-size: 14px; font-weight: 400; letter-spacing: -.3px; color: #bdbdbd; height: 20px; line-height: 20px; margin: 27px 0 6px 16px; }
.side h4.res { margin: 34px 0 5px 16px; }
.side > a { height: 36px; display: grid; grid-template-columns: 24px 1fr; column-gap: 16px; padding-left: 16px; align-items: center; justify-items: start; }
.side > a svg { justify-self: center; }
.side .res ~ a { height: 36.500px; }
.news { margin: auto 13px 11px; height: 188px; background: #dedede; display: flex; flex-direction: column; }
.news h5 { height: 31px; line-height: 28px; padding-left: 11px; background: #263746; border: 1px solid #081a2b; color: #fff; font-size: 16px; letter-spacing: .1px; }
.news p { padding: 15px 0 0 23px; font-size: 15px; line-height: 25.100px; font-weight: bold; white-space: nowrap; letter-spacing: 0; }
.news a { align-self: flex-end; margin: 10px 13px 0 0; font-size: 15px; letter-spacing: 0; line-height: 24px; color: #0b5cad; }
.fold { height: 26px; border-top: 1px solid #d9d9d9; display: flex; align-items: center; justify-content: flex-end; padding: 0 12px 1px 0; }
.main { flex: none; width: 1662px; letter-spacing: .09px; }
.titlebar { height: 75px; border-bottom: 1px solid #ddd; padding: 0 25px; display: flex; justify-content: space-between; }
h1 { font-size: 28px; font-weight: 300; line-height: 38px; margin-top: 5px; letter-spacing: -.25px; color: #222; }
.back { display: flex; align-items: center; gap: 5px; padding-left: 2px; line-height: 24px; margin-top: 3px; color: #0b66b8; }
.btns { display: flex; padding-top: 20px; }
.btn { height: 35px; background: #eee; display: flex; align-items: center; justify-content: center; border-radius: 4px; padding-bottom: 1px; }
.caret { width: 0; height: 0; border: 6px solid transparent; border-top: 7px solid #222; border-bottom: 0; }
.btn .caret { margin: 0 0 1px 16px; }
.w1 { width: 113px; border-radius: 4px 0 0 4px; border-right: 1px solid #d9d9d9; }
.w2 { width: 114px; border-radius: 0 4px 4px 0; }
.w3 { width: 119px; margin-left: 25px; }
.w4 { width: 89px; margin-left: 25px; }
.w5 { width: 119px; margin-left: 1px; }
.btn.w5 .caret { margin-left: 21px; }
.tabs { height: 65px; margin: 0 25px; border-bottom: 1px solid #ddd; display: flex; align-items: flex-end; }
.vt { width: 200px; height: 40px; margin-bottom: -1px; background: #fff; border: 1px solid #ddd; border-bottom: 0; border-radius: 4px 4px 0 0; font-weight: bold; display: flex; align-items: center; padding: 0 0 3px 25px; }
.vt b { width: 31px; height: 25px; margin-left: auto; margin-right: 12px; background: #eee; border: 1px solid #ddd; border-radius: 4px; font-size: 14px; line-height: 23px; text-align: center; }
.filters { display: flex; margin: 19px 0 0 25px; align-items: center; }
.search { width: 382px; height: 37px; border: 1px solid #ddd; border-radius: 4px; display: flex; align-items: center; padding-right: 12px; }
.filter { width: 93px; height: 35px; background: #f9f9f9; border-right: 1px solid #ddd; display: flex; align-items: center; gap: 12px; padding: 0 0 1px 18px; border-radius: 4px 0 0 4px; }
.ph { color: #d4d4d4; margin: -2px auto 0 12px; }
.total { margin: -2px 0 0 12px; color: #999; }
.cols { display: flex; margin: 19px 0 0 25px; }
.table { flex: none; width: 1200px; border: 1px solid #ddd; border-bottom: 0; }
.row { height: 57.200px; border-bottom: 1px solid #ddd; display: grid; grid-template-columns: 31px 87px 88px 87px 88px 255px 306.500px 121px 43px 72px; padding-left: 19px; align-items: center; white-space: nowrap; }
.row.head { height: 45px; background: #f5f5f5; }
.cb { width: 15px; height: 15px; background: #fff; border: 1px solid #ccc; margin-top: -1px; }
.c { display: flex; justify-content: center; align-items: center; }
.n { display: flex; align-items: center; gap: 12px; padding-left: 6px; width: 250px; }
.row > :nth-child(7) { padding-left: 18px; }
.row > :nth-child(10) { padding-left: 9px; }
.sev { width: 75px; height: 25px; line-height: 24px; margin-top: -1px; border-radius: 3px; background: #67ace1; color: #111; font-size: 13px; letter-spacing: -.3px; text-align: center; }
.med { background: #f18c43; color: #fff; }
.mix { background: #775d9b; color: #fff; }
.row .cv { padding-right: 2px; margin-top: -2px; }
.cv em { width: 0; height: 0; border: 3.500px solid transparent; border-top: 6px solid #222; border-bottom: 0; margin-left: 11px; }
.grp { position: relative; flex: none; width: 25px; height: 23px; }
.grp small { position: absolute; left: 0; top: 5px; width: 25px; text-align: center; font-size: 11.500px; line-height: 17px; }
.details { width: 387px; margin-left: 25px; letter-spacing: .05px; }
.details h3 { height: 46px; border-bottom: 1px solid #ddd; font-size: 16px; line-height: 43px; display: flex; justify-content: space-between; align-items: center; letter-spacing: .05px; }
.details h3 svg { margin-top: -2px; }
dl { display: grid; grid-template-columns: 93px 1fr; grid-auto-rows: 28.800px; line-height: 28.800px; padding-top: 9px; }
dd a { color: #0b66b8; }
.details .vh { margin-top: 34px; height: 45px; line-height: 42px; }
.chart { display: flex; padding: 14px 0 0 8px; }
.chart ul { list-style: none; font-size: 14.700px; line-height: 25px; margin: -2px 0 0 33px; }
.chart li { display: flex; align-items: center; gap: 17px; }
.chart li::before { content: ""; width: 10px; height: 10px; border-radius: 50%; background: var(--k); }
.k1 { --k: #91243e; }
.k2 { --k: #dd4b50; }
.k3 { --k: #f18c43; }
.k4 { --k: #f8c851; }
.k5 { --k: #67ace1; }
.scroll { width: 19px; background: #fcfcfc; display: flex; flex-direction: column; padding: 6px 0 5px 3px; }
.scroll i { width: 12px; height: 369px; margin-top: 7px; border-radius: 6px; background: #8b8b8b; }
.scroll .dn { margin-top: auto; }

/* Taskbar */
.taskbar { height: 60px; background: linear-gradient(90deg, #dcdcdc, #dddedb 26%, #dbdfdb 60%, #dcdcdc 80%); border-top: 1px solid #b0b0b0; display: flex; font-size: 14.500px; line-height: 20px; letter-spacing: -.2px; }
.weather { width: 475px; display: flex; padding: 7px 0 0 25px; gap: 3px; }
.weather div { padding-top: 2px; letter-spacing: -.3px; }
.weather span { color: #666; }
.wn { font: 13px "Open Sans", sans-serif; fill: #fff; }
.dock { display: flex; align-items: center; padding-bottom: 1px; }
.sbox { width: 273px; height: 38px; margin-left: 18px; border-radius: 19px; background: #f5f5f5; border: 1px solid #c9cac8; display: flex; align-items: center; gap: 12px; padding-left: 13px; font-size: 16px; color: #555; }
.icons { display: grid; grid-template-columns: repeat(12, 55.100px); margin-left: 3px; align-items: center; justify-items: center; }
.cur { width: 48px; height: 49px; border-radius: 6px; background: #efefee; border: 1px solid #d2d4d2; display: flex; justify-content: center; align-items: center; }
.cur svg { margin-left: 4px; }
.ep1 { font: bold 14px "Open Sans", sans-serif; fill: #fff; }
.ep2 { font: bold 6px "Open Sans", sans-serif; fill: #fff; }
.tray { margin-left: auto; padding-right: 24px; display: flex; align-items: center; padding-bottom: 2px; }
.t2 { margin-left: 23px; }
.lang { width: 50px; text-align: center; margin: 2px 0 0 14px; }
.t3 { margin-left: 12px; }
.t4 { margin-left: 10px; }
.t5 { margin-left: 9px; }
.time { width: 97px; text-align: right; letter-spacing: .1px; }
```
